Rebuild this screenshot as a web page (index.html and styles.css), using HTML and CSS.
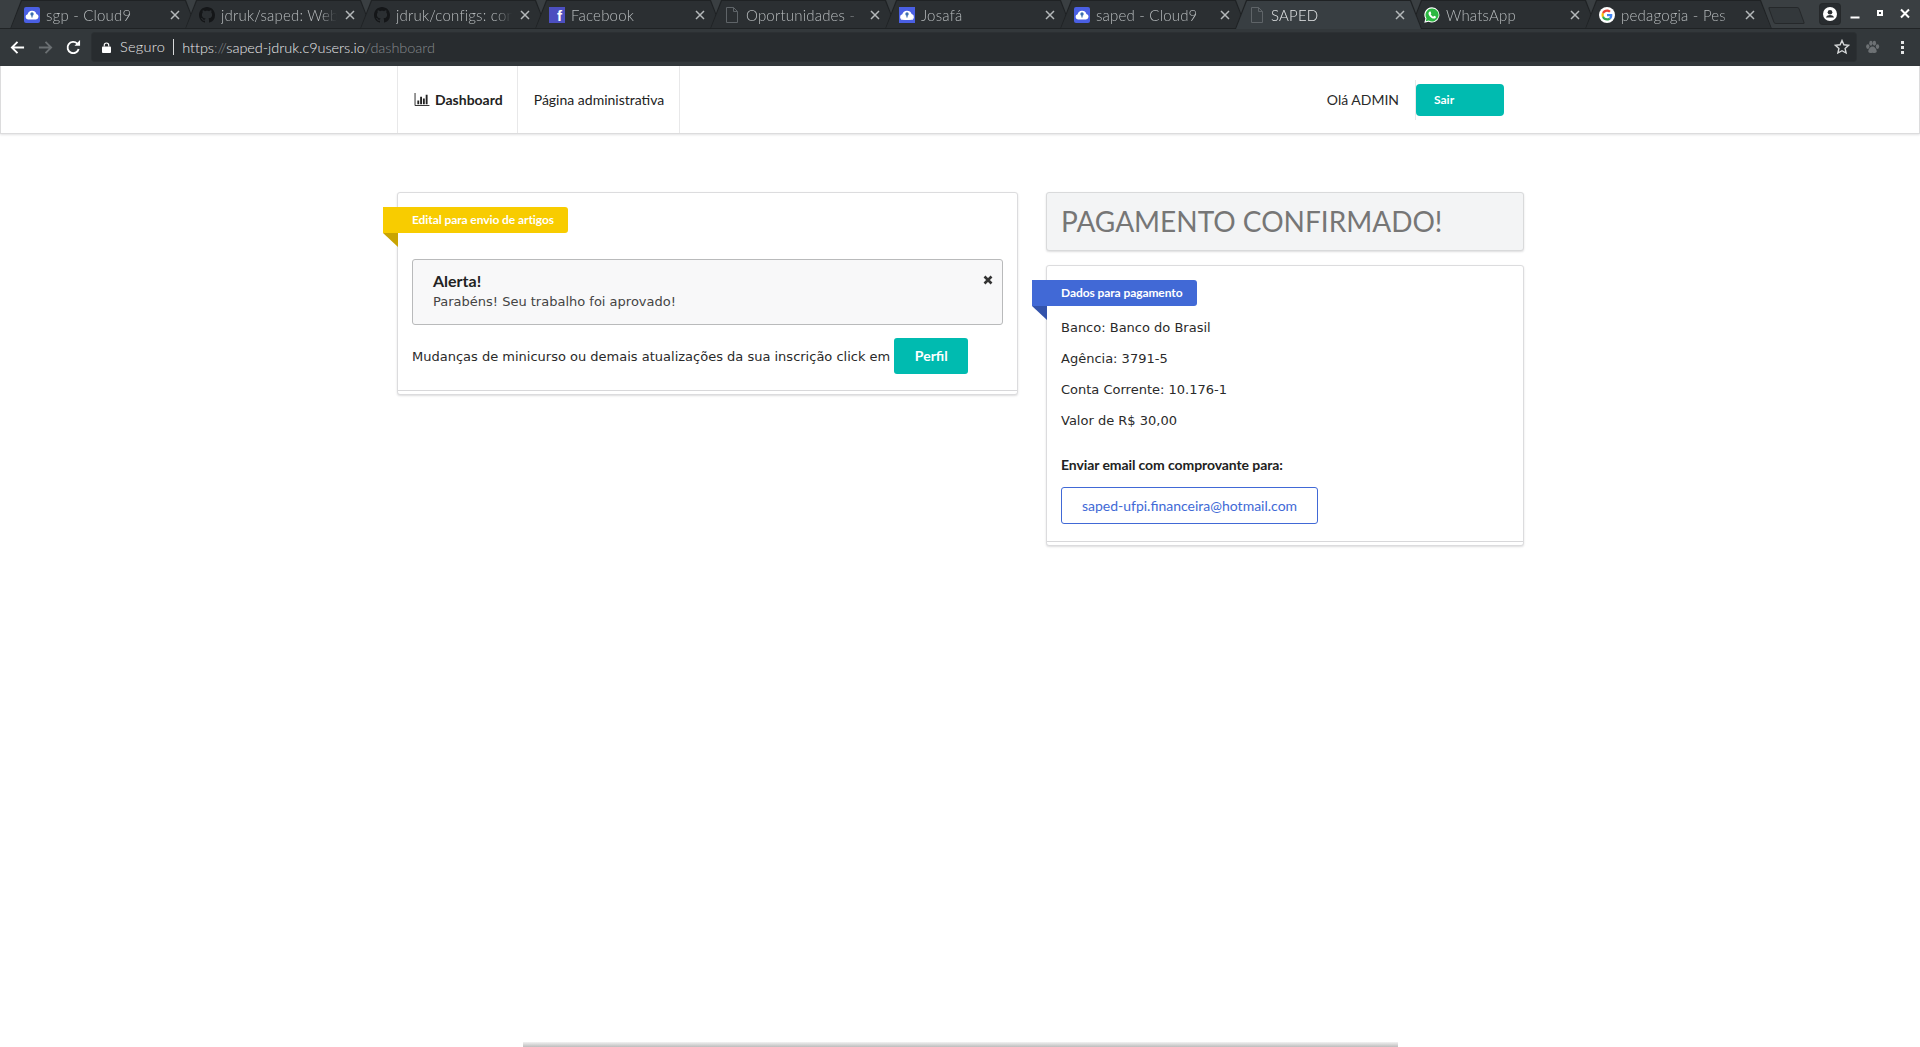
FILE: index.html
```html
<!doctype html>
<html>
<head>
	<meta charset="utf-8">
	<title>SAPED</title>
	<link rel="stylesheet" href="styles.css">
</head>
<body>
	<svg class="defs" width="0" height="0">
		<symbol id="ic-c9" viewBox="0 0 16 16">
			<rect width="16" height="16" rx="2" fill="#4a5fe3"/>
			<path d="M4 12.5a2.7 2.7 0 0 1-.4-5.3A4.6 4.6 0 0 1 12.4 7a2.8 2.8 0 0 1-.3 5.5z" fill="#fff"/>
			<circle cx="8" cy="7" r="1.7" fill="#3c6fb0"/>
			<path d="M7.4 7.5h1.2v3H7.4z" fill="#3c6fb0"/>
		</symbol>
		<symbol id="ic-c9b" viewBox="0 0 16 16">
			<rect width="16" height="16" fill="#4a5fe3"/>
			<path d="M3.6 13a2.9 2.9 0 0 1-.3-5.7 4.9 4.9 0 0 1 9.3-.2 3 3 0 0 1-.3 5.9z" fill="#fff"/>
			<path d="M2 11.5c3 2 9 2 12 0v1.5H2z" fill="#c9d4ef"/>
			<circle cx="8" cy="7" r="1.7" fill="#3c6fb0"/>
			<path d="M7.4 7.5h1.2v3H7.4z" fill="#3c6fb0"/>
		</symbol>
		<symbol id="ic-gh" viewBox="0 0 16 16">
			<path fill="#141618" d="M8 0C3.58 0 0 3.58 0 8c0 3.54 2.29 6.53 5.47 7.59.4.07.55-.17.55-.38 0-.19-.01-.82-.01-1.49-2.01.37-2.53-.49-2.69-.94-.09-.23-.48-.94-.82-1.13-.28-.15-.68-.52-.01-.53.63-.01 1.08.58 1.23.82.72 1.21 1.87.87 2.33.66.07-.52.28-.87.51-1.07-1.78-.2-3.64-.89-3.64-3.95 0-.87.31-1.59.82-2.15-.08-.2-.36-1.02.08-2.12 0 0 .67-.21 2.2.82.64-.18 1.32-.27 2-.27s1.36.09 2 .27c1.53-1.04 2.2-.82 2.2-.82.44 1.1.16 1.92.08 2.12.51.56.82 1.27.82 2.15 0 3.07-1.87 3.75-3.65 3.95.29.25.54.73.54 1.48 0 1.07-.01 1.93-.01 2.2 0 .21.15.46.55.38A8.01 8.01 0 0 0 16 8c0-4.42-3.58-8-8-8z"/>
		</symbol>
		<symbol id="ic-doc" viewBox="0 0 16 16">
			<path d="M2.5 .5h7l4 4v11h-11zM9.5 .5v4h4" fill="none" stroke="#5f6468"/>
		</symbol>
		<symbol id="ic-wa" viewBox="0 0 16 16">
			<path d="M8 .2a7.6 7.6 0 0 0-6.6 11.4L.3 15.8l4.3-1.1A7.6 7.6 0 1 0 8 .2z" fill="#fff"/>
			<path d="M8 1.4a6.5 6.5 0 0 0-5.5 9.9l-.7 2.9 3-.7A6.5 6.5 0 1 0 8 1.4z" fill="#2bb741"/>
			<path d="M5.7 4.4c-.5.2-1.2 1-1.2 2 0 1.800 2.800 5.200 5.600 5.200 1 0 1.700-.8 1.800-1.400l-.1-.6-1.700-.8-.8 1c-1-.3-2.100-1.400-2.600-2.500l.6-.8-.7-1.900z" fill="#fff"/>
		</symbol>
		<symbol id="ic-g" viewBox="0 0 64 64">
			<circle cx="32" cy="32" r="32" fill="#fff"/>
			<g transform="translate(10 10) scale(.92)">
				<path fill="#EA4335" d="M24 9.500c3.540 0 6.710 1.220 9.210 3.600l6.850-6.850C35.900 2.380 30.470 0 24 0 14.620 0 6.510 5.380 2.560 13.220l7.980 6.190C12.430 13.720 17.740 9.500 24 9.500z"/>
				<path fill="#4285F4" d="M46.980 24.550c0-1.570-.15-3.090-.38-4.550H24v9.020h12.940c-.58 2.960-2.260 5.480-4.780 7.180l7.730 6c4.510-4.180 7.090-10.360 7.090-17.650z"/>
				<path fill="#FBBC05" d="M10.530 28.590c-.48-1.450-.76-2.990-.76-4.590s.27-3.140.76-4.590l-7.980-6.190C.92 16.460 0 20.120 0 24c0 3.880.92 7.540 2.560 10.780l7.970-6.190z"/>
				<path fill="#34A853" d="M24 48c6.480 0 11.930-2.130 15.890-5.810l-7.730-6c-2.150 1.450-4.920 2.300-8.160 2.300-6.260 0-11.570-4.220-13.470-9.910l-7.980 6.190C6.510 42.620 14.620 48 24 48z"/>
			</g>
		</symbol>
		<symbol id="ic-x" viewBox="0 0 10 10">
			<path d="M1 1l8 8M9 1l-8 8" fill="none" stroke="#b4b8ba" stroke-width="1.500"/>
		</symbol>
	</svg>

	<div class="chrome">
		<div class="tabstrip">
			<div class="tab">
				<svg class="favicon"><use href="#ic-c9"/></svg>
				<span class="tab-title">sgp - Cloud9</span>
				<svg class="tab-x"><use href="#ic-x"/></svg>
			</div>
			<div class="tab">
				<svg class="favicon"><use href="#ic-gh"/></svg>
				<span class="tab-title">jdruk/saped: Web</span>
				<svg class="tab-x"><use href="#ic-x"/></svg>
			</div>
			<div class="tab">
				<svg class="favicon"><use href="#ic-gh"/></svg>
				<span class="tab-title">jdruk/configs: con</span>
				<svg class="tab-x"><use href="#ic-x"/></svg>
			</div>
			<div class="tab">
				<span class="favicon fb">f</span>
				<span class="tab-title">Facebook</span>
				<svg class="tab-x"><use href="#ic-x"/></svg>
			</div>
			<div class="tab">
				<svg class="favicon"><use href="#ic-doc"/></svg>
				<span class="tab-title">Oportunidades - </span>
				<svg class="tab-x"><use href="#ic-x"/></svg>
			</div>
			<div class="tab">
				<svg class="favicon"><use href="#ic-c9b"/></svg>
				<span class="tab-title">Josafá</span>
				<svg class="tab-x"><use href="#ic-x"/></svg>
			</div>
			<div class="tab">
				<svg class="favicon"><use href="#ic-c9"/></svg>
				<span class="tab-title">saped - Cloud9</span>
				<svg class="tab-x"><use href="#ic-x"/></svg>
			</div>
			<div class="tab active">
				<svg class="favicon"><use href="#ic-doc"/></svg>
				<span class="tab-title">SAPED</span>
				<svg class="tab-x"><use href="#ic-x"/></svg>
			</div>
			<div class="tab">
				<svg class="favicon"><use href="#ic-wa"/></svg>
				<span class="tab-title">WhatsApp</span>
				<svg class="tab-x"><use href="#ic-x"/></svg>
			</div>
			<div class="tab">
				<svg class="favicon"><use href="#ic-g"/></svg>
				<span class="tab-title">pedagogia - Pes</span>
				<svg class="tab-x"><use href="#ic-x"/></svg>
			</div>
			<div class="newtab"></div>
			<div class="winctl">
				<span class="profile">
					<svg width="14" height="14" viewBox="0 0 18 18">
						<circle cx="9" cy="9" r="9" fill="#fff"/>
						<circle cx="9" cy="6.800" r="3" fill="#2b2f32"/>
						<path d="M3.800 13.500c1-2.400 3-3.200 5.200-3.200s4.200.8 5.200 3.200z" fill="#2b2f32"/>
					</svg>
				</span>
				<svg class="winbtn" viewBox="0 0 12 12"><path d="M1.500 9.500h9" stroke="#fff" stroke-width="2"/></svg>
				<svg class="winbtn" viewBox="0 0 12 12"><rect x="4" y="3" width="4" height="4" fill="none" stroke="#fff" stroke-width="2"/></svg>
				<svg class="winbtn" viewBox="0 0 12 12"><path d="M2 1.500l8 8M10 1.500l-8 8" stroke="#fff" stroke-width="2"/></svg>
			</div>
		</div>

		<div class="toolbar">
			<svg class="navbtn" viewBox="0 0 16 16"><path d="M15 8H2M8 2L2 8l6 6" fill="none" stroke="#fff" stroke-width="2"/></svg>
			<svg class="navbtn" viewBox="0 0 16 16"><path d="M1 8h13M8 2l6 6-6 6" fill="none" stroke="#6a6f72" stroke-width="2"/></svg>
			<svg class="navbtn" viewBox="0 0 16 16"><path d="M13.500 9.500A6 6 0 1 1 12 3.800" fill="none" stroke="#fff" stroke-width="2"/><path d="M9 6h6V0z" fill="#fff"/></svg>
			<div class="omnibox">
				<svg class="lock" viewBox="0 0 10 12"><path d="M2.500 5V3.500a2.500 2.500 0 0 1 5 0V5" fill="none" stroke="#fff" stroke-width="1.300"/><rect y="5" width="10" height="7" rx="1" fill="#fff"/></svg>
				<span class="secure">Seguro</span>
				<span class="url"><b>https</b>://<b>saped-jdruk.c9users.io</b>/dashboard</span>
				<svg class="star" viewBox="0 0 16 16"><path d="M8 1.500l1.900 4.300 4.700.5-3.500 3.100 1 4.600L8 11.700l-4.100 2.300 1-4.600-3.500-3.100 4.700-.5z" fill="none" stroke="#d6d8d9" stroke-width="1.400"/></svg>
			</div>
			<svg class="paw" viewBox="0 0 16 16" fill="#6d7174"><ellipse cx="3" cy="7" rx="1.800" ry="2.500"/><ellipse cx="6.300" cy="3.400" rx="1.800" ry="2.600"/><ellipse cx="10" cy="3.400" rx="1.800" ry="2.600"/><ellipse cx="13.300" cy="7" rx="1.800" ry="2.500"/><path d="M8 7c-2.500 0-4.500 3-4.500 5 0 2 2 2 4.500 1.500 2.500.5 4.500.5 4.500-1.500 0-2-2-5-4.500-5z"/></svg>
			<span class="dots"><i></i><i></i><i></i></span>
		</div>
	</div>

	<div class="page">
		<nav class="navbar">
			<div class="wrap nav-inner">
				<a class="nav-item current">
					<svg class="chart" viewBox="0 0 16 14"><path d="M.5 0v13.500H16" fill="none" stroke="#222"/><path d="M3 8h2v4H3zM6 4h2v8H6zM9 6h2v6H9zM12 2h2v10h-2z" fill="#222"/></svg>
					Dashboard
				</a>
				<a class="nav-item">Página administrativa</a>
				<div class="nav-right">
					<span class="hello">Olá ADMIN</span>
					<a class="btn-sair">Sair</a>
				</div>
			</div>
		</nav>

		<main class="wrap columns">
			<section class="segment left-seg">
				<div class="ribbon yellow">Edital para envio de artigos</div>
				<div class="alert">
					<svg class="alert-x" viewBox="0 0 10 10"><path d="M1.500 1.500l7 7M8.500 1.500l-7 7" stroke="#333" stroke-width="2.600"/></svg>
					<h4>Alerta!</h4>
					<p>Parabéns! Seu trabalho foi aprovado!</p>
				</div>
				<div class="perfil-row">
					<span>Mudanças de minicurso ou demais atualizações da sua inscrição click em</span>
					<a class="btn-perfil">Perfil</a>
				</div>
			</section>

			<div class="right-col">
				<div class="paid-header">PAGAMENTO CONFIRMADO!</div>
				<section class="segment pay-seg">
					<div class="ribbon blue">Dados para pagamento</div>
					<p class="pay-line">Banco: Banco do Brasil</p>
					<p class="pay-line">Agência: 3791-5</p>
					<p class="pay-line">Conta Corrente: 10.176-1</p>
					<p class="pay-line">Valor de R$ 30,00</p>
					<h5>Enviar email com comprovante para:</h5>
					<a class="btn-mail">saped-ufpi.financeira@hotmail.com</a>
				</section>
			</div>
		</main>

		<div class="foot-bar"></div>
	</div>
</body>
</html>
```
FILE: styles.css
```css
html, body {
	margin: 0;
	padding: 0;
	height: 100%;
}

body {
	display: flex;
	flex-direction: column;
	height: 1047px;
	overflow: hidden;
	background: #fff;
	color: #2a2a2a;
	font-family: "DejaVu Sans", sans-serif;
	font-size: 13px;
}

.defs {
	position: absolute;
}

/* browser frame */
.chrome {
	background: #33383b;
	height: 66px;
	flex: none;
}

.tabstrip {
	display: flex;
	height: 29px;
	padding-left: 10px;
	position: relative;
	background: #3a3f42;
	box-sizing: border-box;
	box-shadow: inset 0 -1px 0 #212426;
}

.tab {
	position: relative;
	display: flex;
	align-items: center;
	flex: none;
	box-sizing: border-box;
	width: 187px;
	height: 29px;
	margin-right: -12px;
	padding: 0 17px 0 14px;
	color: #b8bcbe;
	font-family: Lato, sans-serif;
	font-weight: 300;
	font-size: 15px;
	background: #1f2224;
	clip-path: polygon(0 100%, 11px 0, 176px 0, 100% 100%);
}

.tab::before {
	content: "";
	position: absolute;
	inset: 1px 1px 1px 1px;
	background: #2b2f32;
	clip-path: polygon(0 100%, 11px 0, 174px 0, 100% 100%);
}

.tab.active {
	z-index: 2;
	color: #e4e6e7;
}

.tab.active::before {
	background: #383e42;
	bottom: 0;
}

.favicon,
.tab-title,
.tab-x {
	position: relative;
}

.favicon {
	flex: none;
	width: 16px;
	height: 16px;
}

.fb {
	background: #4c4fc0;
	color: #fff;
	font: bold 15px/18px "Liberation Sans", sans-serif;
	text-align: right;
	padding-right: 3px;
	box-sizing: border-box;
	overflow: hidden;
}

.tab-title {
	flex: 1;
	min-width: 0;
	margin-left: 6px;
	white-space: nowrap;
	overflow: hidden;
	letter-spacing: .2px;
	-webkit-mask-image: linear-gradient(to right, #000 86%, transparent 100%);
	mask-image: linear-gradient(to right, #000 86%, transparent 100%);
}

.tab-x {
	flex: none;
	width: 10px;
	height: 10px;
	margin-left: 8px;
}

.newtab {
	position: absolute;
	left: 1771px;
	top: 7px;
	width: 31px;
	height: 17px;
	background: #33383b;
	border: 1px solid #25282a;
	box-sizing: border-box;
	transform: skewX(20deg);
	border-radius: 2px;
}

.winctl {
	position: absolute;
	right: 0;
	top: 0;
	height: 28px;
	display: flex;
	align-items: center;
}

.profile {
	display: flex;
	align-items: center;
	justify-content: center;
	width: 20px;
	height: 20px;
	margin-right: 2.500px;
	background: #282c2f;
	border-radius: 3px;
	box-shadow: 0 0 0 1px #25282a;
}

.winbtn {
	width: 12px;
	height: 12px;
	margin: 0 6.500px 1px;
}

.winbtn:last-child {
	margin-right: 9px;
}

.toolbar {
	display: flex;
	align-items: center;
	height: 36px;
	padding-left: 10px;
	box-sizing: border-box;
}

.navbtn {
	width: 15px;
	height: 15px;
	margin-right: 13px;
	flex: none;
}

.omnibox {
	display: flex;
	align-items: center;
	flex: none;
	width: 1764px;
	height: 28px;
	margin-left: -2px;
	padding-left: 10px;
	box-sizing: border-box;
	background: #282c2f;
	border-radius: 3px;
	box-shadow: 0 0 0 1px #2c3033;
	color: #e8e9ea;
	font-family: Lato, sans-serif;
	font-weight: 300;
	font-size: 14.500px;
}

.lock {
	width: 9px;
	height: 11px;
	margin-right: 9px;
}

.secure {
	padding-right: 8px;
	margin-right: 8px;
	border-right: 1px solid #d8d9da;
	line-height: 16px;
	letter-spacing: .3px;
}

.url {
	flex: 1;
	color: #85898c;
	letter-spacing: -.05px;
}

.url b {
	font-weight: 300;
	color: #e8e9ea;
}

.star {
	width: 16px;
	height: 16px;
	margin-right: 6px;
}

.paw {
	width: 15px;
	height: 15px;
	margin-left: 9px;
}

.dots {
	display: flex;
	flex-direction: column;
	gap: 2px;
	margin-left: 21px;
}

.dots i {
	display: block;
	width: 3px;
	height: 3px;
	background: #e4e5e6;
}

/* page */
.page {
	flex: 1;
	display: flex;
	flex-direction: column;
	min-height: 0;
}

.wrap {
	width: 1126px;
	margin: 0 auto;
}

.navbar {
	flex: none;
	height: 68px;
	box-sizing: border-box;
	border: 1px solid #dcdcdd;
	border-top: 0;
	box-shadow: 0 1px 2px rgba(34, 36, 38, .12);
}

.nav-inner {
	display: flex;
	height: 100%;
	font-family: Lato, sans-serif;
	font-size: 14px;
}

.nav-item {
	display: flex;
	align-items: center;
	padding: 0 15px 0 15.500px;
	border-left: 1px solid #e8e8e9;
	color: #222;
}

.nav-item:nth-child(2) {
	border-right: 1px solid #e8e8e9;
}

.nav-item.current {
	font-weight: 700;
	padding-right: 14.500px;
}

.chart {
	width: 16px;
	height: 13px;
	margin-right: 5.500px;
}

.nav-right {
	display: flex;
	align-items: center;
	margin-left: auto;
	margin-right: 19px;
}

.hello {
	margin-right: 17px;
}

.btn-sair {
	position: relative;
	display: block;
	box-sizing: border-box;
	width: 88px;
	height: 32px;
	margin-top: 1px;
	padding-left: 18px;
	line-height: 32px;
	background: #00bbb0;
	border-radius: 4px;
	color: #fff;
	font-weight: 700;
	font-size: 12px;
}

.btn-sair::before {
	content: "";
	position: absolute;
	left: -1px;
	top: -4px;
	bottom: -4px;
	width: 1px;
	background: #e8e8e9;
}

.columns {
	display: flex;
	align-items: flex-start;
	gap: 28px;
	margin-top: 58px;
}

.segment {
	position: relative;
	box-sizing: border-box;
	background: #fff;
	border: 1px solid #dcdcde;
	border-radius: 3px;
	box-shadow: 0 1px 2px rgba(34, 36, 38, .15);
}

.segment::after {
	content: "";
	position: absolute;
	left: 0;
	right: 0;
	bottom: 0;
	height: 3px;
	border-top: 1px solid #d8d8da;
}

.left-seg {
	flex: none;
	width: 621px;
	height: 203px;
	padding: 14px;
}

.ribbon {
	position: relative;
	display: inline-block;
	box-sizing: border-box;
	height: 26px;
	margin-left: -29px;
	padding: 0 14px 0 29px;
	line-height: 26px;
	border-radius: 0 3px 3px 0;
	color: #fff;
	font-family: Lato, sans-serif;
	font-weight: 700;
	font-size: 12px;
	letter-spacing: -.08px;
	vertical-align: top;
}

.ribbon::after {
	content: "";
	position: absolute;
	left: 0;
	top: 100%;
	width: 15px;
	height: 14px;
	clip-path: polygon(0 0, 100% 0, 100% 100%);
}

.ribbon.yellow {
	background: #f8cc00;
}

.ribbon.yellow::after {
	background: #c9a402;
}

.ribbon.blue {
	padding-right: 15px;
	background: #4169d6;
}

.ribbon.blue::after {
	background: #3353ab;
}

.alert {
	position: relative;
	box-sizing: border-box;
	height: 66px;
	margin-top: 26px;
	padding: 10px 20px;
	background: #f8f8f9;
	border: 1px solid #b9babb;
	border-radius: 3px;
}

.alert h4 {
	margin: 0 0 2px;
	font-family: Lato, sans-serif;
	font-weight: 700;
	font-size: 16px;
	line-height: 21px;
	color: #222;
}

.alert p {
	margin: 0;
	line-height: 18px;
	color: #444;
}

.alert-x {
	position: absolute;
	right: 9px;
	top: 15px;
	width: 10px;
	height: 10px;
}

.perfil-row {
	display: flex;
	align-items: center;
	margin-top: 13px;
}

.btn-perfil {
	display: block;
	box-sizing: border-box;
	width: 74px;
	height: 36px;
	margin-left: 4px;
	line-height: 36px;
	text-align: center;
	background: #00bbb0;
	border-radius: 3px;
	color: #fff;
	font-family: Lato, sans-serif;
	font-weight: 700;
	font-size: 14px;
}

.right-col {
	flex: none;
	width: 478px;
}

.paid-header {
	box-sizing: border-box;
	height: 59px;
	padding-left: 14px;
	line-height: 57px;
	background: #f3f4f5;
	border: 1px solid #d9dadb;
	border-radius: 3px;
	box-shadow: 0 1px 2px rgba(34, 36, 38, .15);
	color: #767676;
	font-family: Lato, sans-serif;
	font-size: 28px;
}

.pay-seg {
	height: 281px;
	margin-top: 14px;
	padding: 14px;
}

.pay-line {
	margin: 0 0 13px;
	line-height: 18px;
}

.pay-line:first-of-type {
	margin-top: 13px;
}

.pay-seg h5 {
	margin: 26px 0 0;
	font-family: Lato, sans-serif;
	font-weight: 700;
	font-size: 14px;
	letter-spacing: -.09px;
	line-height: 18px;
	color: #222;
}

.btn-mail {
	display: block;
	box-sizing: border-box;
	width: 257px;
	height: 37px;
	margin-top: 13px;
	line-height: 35px;
	text-align: center;
	border: 1px solid #4169d6;
	border-radius: 3px;
	color: #4169d6;
	font-family: Lato, sans-serif;
	font-size: 14px;
}

.foot-bar {
	flex: none;
	align-self: center;
	width: 875px;
	height: 5px;
	margin-top: auto;
	background: linear-gradient(to bottom, #f2f2f2, #bdbdbd);
}
```
